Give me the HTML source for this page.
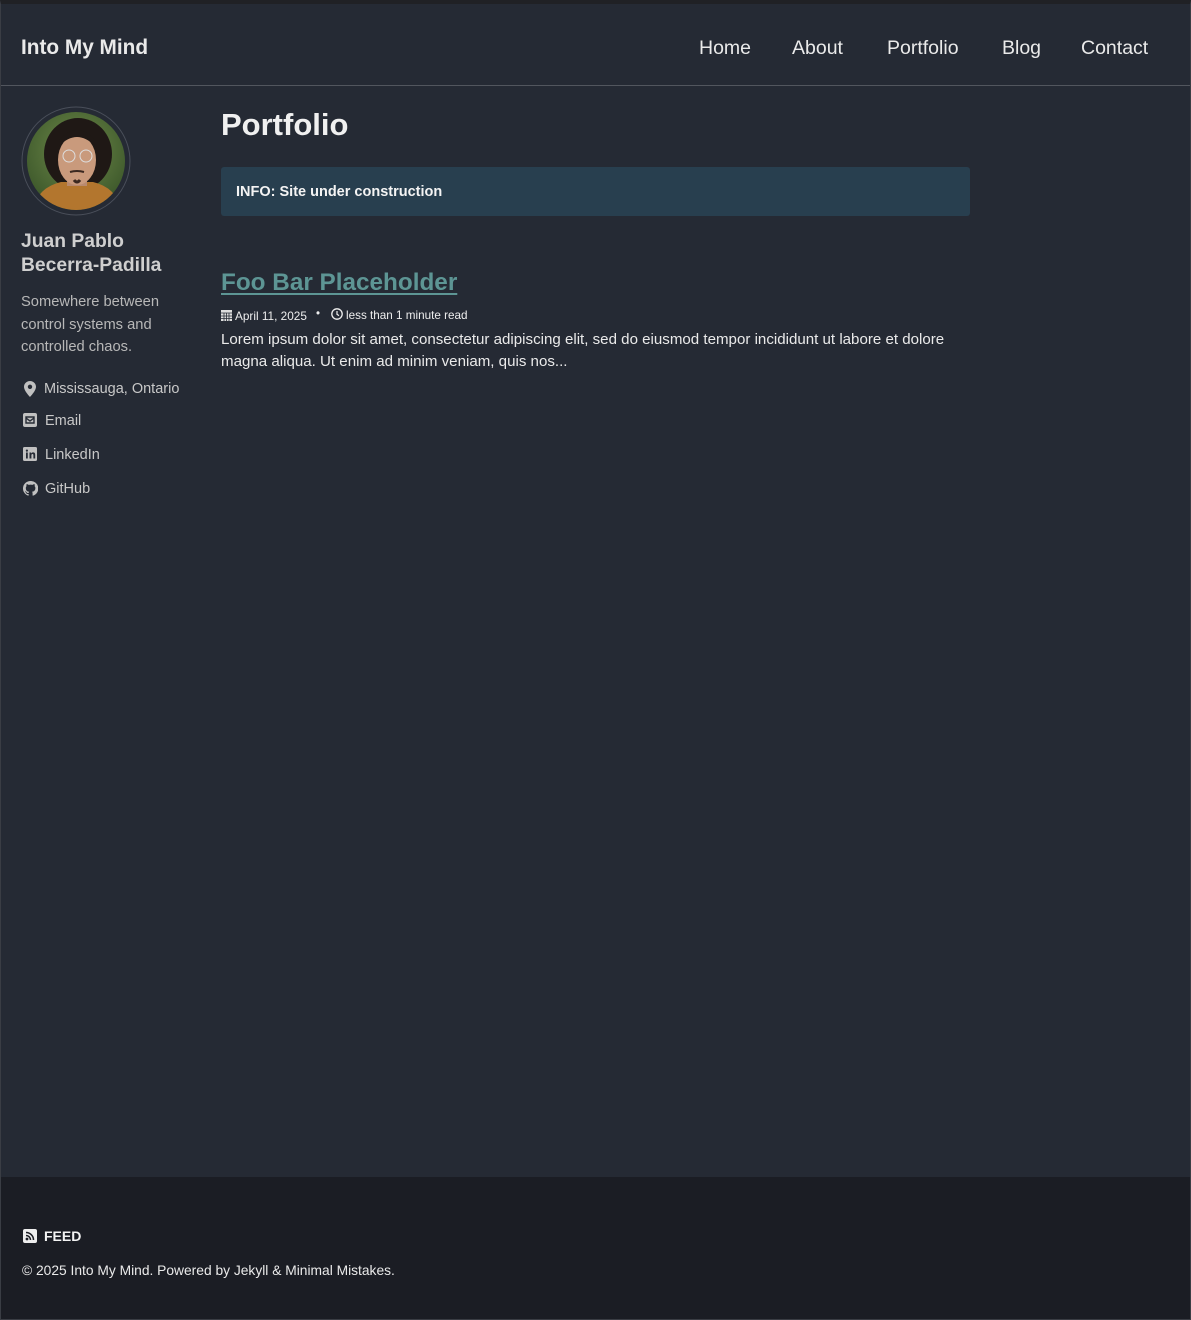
<!DOCTYPE html>
<html><head><meta charset="utf-8"><style>
*{margin:0;padding:0;box-sizing:border-box}
html,body{width:1191px;height:1320px;overflow:hidden;background:#252a34;font-family:"Liberation Sans",sans-serif;color:#eaeaea}
.frame{position:absolute;left:0;top:0;width:1191px;height:1320px;border-top:4px solid #202125;border-left:1px solid #3a3d44;border-right:1px solid #3a3d44;border-bottom:1px solid #3a3d44}
.hdr{position:absolute;left:1px;top:4px;width:1189px;height:82px;border-bottom:1px solid #52565e}
.abs{position:absolute;white-space:nowrap}
.logo{left:21px;top:36px;font-size:20.8px;font-weight:bold;color:#eaeaea}
.nav{top:37px;font-size:19.5px;color:#eaeaea}
.side{color:#c8c8c8}
.foot{position:absolute;left:1px;top:1177px;width:1189px;height:142px;background:#1b1d24}
</style></head><body>
<div class="hdr"></div>
<div class="abs logo">Into My Mind</div>
<div class="abs nav" style="left:699px">Home</div>
<div class="abs nav" style="left:792px">About</div>
<div class="abs nav" style="left:887px">Portfolio</div>
<div class="abs nav" style="left:1002px">Blog</div>
<div class="abs nav" style="left:1081px">Contact</div>

<svg class="abs" style="left:21px;top:106px" width="110" height="110" viewBox="0 0 110 110">
<defs><clipPath id="c"><circle cx="55" cy="55" r="49"/></clipPath>
<radialGradient id="bg" cx="0.5" cy="0.4" r="0.7"><stop offset="0" stop-color="#6f8a4a"/><stop offset="1" stop-color="#2f4a22"/></radialGradient></defs>
<circle cx="55" cy="55" r="54" fill="#252a34" stroke="#4a4f5a" stroke-width="1"/>
<g clip-path="url(#c)">
<rect width="110" height="110" fill="url(#bg)"/>
<ellipse cx="57" cy="48" rx="34" ry="36" fill="#1f1815"/>
<path d="M10 110 Q14 82 40 76 L72 76 Q98 82 102 110Z" fill="#b3762e"/>
<rect x="46" y="64" width="20" height="16" fill="#b98a6e"/>
<ellipse cx="56" cy="54" rx="19" ry="25" fill="#c99a7c"/>
<path d="M38 40 Q56 22 74 40 L74 34 Q56 14 38 34Z" fill="#1f1815"/>
<circle cx="48" cy="50" r="6" fill="none" stroke="#ddd" stroke-width="1"/>
<circle cx="65" cy="50" r="6" fill="none" stroke="#ddd" stroke-width="1"/>
<path d="M49 66 Q56 64 63 66" stroke="#3a2820" stroke-width="2" fill="none"/>
<path d="M53 74 Q56 78 59 74" stroke="#3a2820" stroke-width="3" fill="none"/>
</g></svg>

<div class="abs side" style="left:21px;top:230px;font-size:19.3px;font-weight:bold;line-height:24px;color:#cfcfcf">Juan Pablo<br>Becerra-Padilla</div>
<div class="abs side" style="left:21px;top:291px;font-size:14.7px;line-height:22.5px;color:#b8b8b8">Somewhere between<br>control systems and<br>controlled chaos.</div>

<svg class="abs" style="left:24px;top:381px" width="12" height="16" viewBox="0 0 12 16"><path d="M6 0C2.7 0 0 2.6 0 5.8 0 10 6 16 6 16s6-6 6-10.2C12 2.6 9.3 0 6 0zm0 8a2.2 2.2 0 110-4.4A2.2 2.2 0 016 8z" fill="#c0c0c0"/></svg>
<div class="abs side" style="left:44px;top:381px;font-size:14.5px">Mississauga, Ontario</div>
<svg class="abs" style="left:23px;top:413px" width="14" height="14" viewBox="0 0 14 14"><rect width="14" height="14" rx="2" fill="#c0c0c0"/><path d="M3 5l4 3 4-3M3 4h8v6H3z" stroke="#252a34" stroke-width="1.4" fill="none"/></svg>
<div class="abs side" style="left:45px;top:413px;font-size:14.5px">Email</div>
<svg class="abs" style="left:23px;top:447px" width="14" height="14" viewBox="0 0 14 14"><rect width="14" height="14" rx="1.5" fill="#c0c0c0"/><rect x="3" y="5.5" width="1.8" height="6" fill="#252a34"/><circle cx="3.9" cy="3.6" r="1.1" fill="#252a34"/><path d="M6.5 5.5h1.7v1c.5-.8 1.2-1.1 2-1.1 1.4 0 2 .9 2 2.4v3.7h-1.8V8.2c0-.8-.3-1.2-.9-1.2-.7 0-1.1.5-1.1 1.3v3.2H6.5z" fill="#252a34"/></svg>
<div class="abs side" style="left:45px;top:447px;font-size:14.5px">LinkedIn</div>
<svg class="abs" style="left:23px;top:481px" width="15" height="15" viewBox="0 0 16 16"><path fill="#c0c0c0" d="M8 0a8 8 0 00-2.5 15.6c.4 0 .5-.2.5-.4v-1.4c-2.2.5-2.7-1-2.7-1-.4-.9-.9-1.200-.9-1.2-.7-.5.1-.5.1-.5.8.1 1.2.8 1.2.8.7 1.3 1.9.9 2.4.7 0-.5.3-.9.5-1.1-1.8-.2-3.6-.9-3.6-4 0-.9.3-1.6.8-2.1-.1-.2-.4-1 .1-2.1 0 0 .7-.2 2.2.8a7.4 7.4 0 014 0c1.5-1 2.2-.8 2.2-.8.4 1.1.2 1.9.1 2.1.5.6.8 1.3.8 2.100 0 3.1-1.9 3.8-3.6 4 .3.3.6.8.6 1.5v2.2c0 .2.1.5.6.4A8 8 0 008 0z"/></svg>
<div class="abs side" style="left:45px;top:481px;font-size:14.5px">GitHub</div>

<div class="abs" style="left:221px;top:107px;font-size:31px;font-weight:bold;color:#f0f0f0">Portfolio</div>
<div class="abs" style="left:221px;top:167px;width:749px;height:49px;background:#283f4f;border-radius:3px"></div>
<div class="abs" style="left:236px;top:184px;font-size:14.5px;font-weight:bold;color:#f4f4f4">INFO: Site under construction</div>

<div class="abs" style="left:221px;top:269px;font-size:24.3px;font-weight:bold;color:#5d9594;text-decoration:underline;text-decoration-thickness:2px;text-underline-offset:3px">Foo Bar Placeholder</div>
<svg class="abs" style="left:221px;top:309px" width="11" height="12" viewBox="0 0 11 12"><rect y="1" width="11" height="11" fill="#ddd"/><path d="M0 4h11M3 4v8M5.5 4v8M8 4v8M0 7h11M0 9.5h11" stroke="#252a34" stroke-width=".8"/></svg>
<div class="abs" style="left:235px;top:309px;font-size:11.8px;color:#eee">April 11, 2025</div>
<div class="abs" style="left:316px;top:308px;font-size:11.5px;color:#eee">•</div>
<svg class="abs" style="left:331px;top:308px" width="12" height="12" viewBox="0 0 12 12"><circle cx="6" cy="6" r="5.2" fill="none" stroke="#eee" stroke-width="1.3"/><path d="M6 3v3.3l2 1.3" stroke="#eee" stroke-width="1.2" fill="none"/></svg>
<div class="abs" style="left:346px;top:309px;font-size:11.7px;color:#eee">less than 1 minute read</div>
<div class="abs" style="left:221px;top:329px;font-size:15.1px;line-height:22px;color:#eaeaea">Lorem ipsum dolor sit amet, consectetur adipiscing elit, sed do eiusmod tempor incididunt ut labore et dolore<br>magna aliqua. Ut enim ad minim veniam, quis nos...</div>

<div class="foot"></div>
<svg class="abs" style="left:23px;top:1229px" width="14" height="14" viewBox="0 0 14 14"><rect width="14" height="14" rx="2" fill="#eee"/><circle cx="4" cy="10" r="1.4" fill="#1b1d24"/><path d="M3 6.5a4.5 4.5 0 014.5 4.5M3 3.5a7.5 7.5 0 017.5 7.5" stroke="#1b1d24" stroke-width="1.5" fill="none"/></svg>
<div class="abs" style="left:44px;top:1228px;font-size:14px;font-weight:bold;color:#f4f4f4">FEED</div>
<div class="abs" style="left:22px;top:1263px;font-size:13.8px;color:#eaeaea">© 2025 Into My Mind. Powered by Jekyll &amp; Minimal Mistakes.</div>
<div class="frame"></div>
</body></html>
